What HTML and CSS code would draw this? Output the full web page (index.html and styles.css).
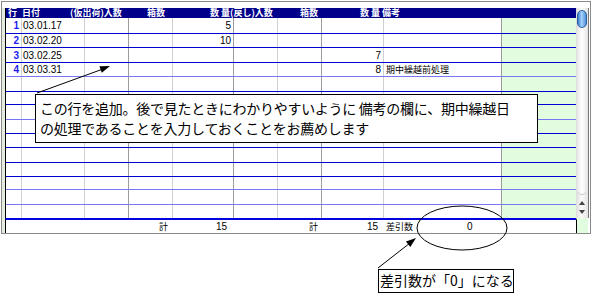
FILE: index.html
```html
<!DOCTYPE html>
<html lang="ja">
<head>
 <meta charset="UTF-8">
 <meta name="viewport" content="width=device-width, initial-scale=1.0">
 <title>差引数</title>
 <link rel="stylesheet" href="styles.css">
</head>
<body>
 <div class="frame">
  <div class="main">
   <div class="head">
    <span></span>
    <span>行</span>
    <span>日付</span>
    <span>(仮出荷)入数</span>
    <span>箱数</span>
    <span>数 量(戻し)入数</span>
    <span>箱数</span>
    <span>数 量 備考</span>
   </div>
   <div class="rows">
    <div class="row"><div class="c no">1</div><div class="c">03.01.17</div><div class="c d"></div><div class="c"></div><div class="c d num">5</div><div class="c"></div><div class="c d"></div><div class="c num"></div><div class="c d"></div><div class="c g"></div></div>
    <div class="row"><div class="c no">2</div><div class="c">03.02.20</div><div class="c d"></div><div class="c"></div><div class="c d num">10</div><div class="c"></div><div class="c d"></div><div class="c num"></div><div class="c d"></div><div class="c g"></div></div>
    <div class="row"><div class="c no">3</div><div class="c">03.02.25</div><div class="c d"></div><div class="c"></div><div class="c d num"></div><div class="c"></div><div class="c d"></div><div class="c num">7</div><div class="c d"></div><div class="c g"></div></div>
    <div class="row light"><div class="c no">4</div><div class="c">03.03.31</div><div class="c d"></div><div class="c"></div><div class="c d num"></div><div class="c"></div><div class="c d"></div><div class="c num">8</div><div class="c d note">期中繰越前処理</div><div class="c g"></div></div>
    <div class="row"><div class="c"></div><div class="c"></div><div class="c d"></div><div class="c"></div><div class="c d"></div><div class="c"></div><div class="c d"></div><div class="c"></div><div class="c d"></div><div class="c g"></div></div>
    <div class="row"><div class="c"></div><div class="c"></div><div class="c d"></div><div class="c"></div><div class="c d"></div><div class="c"></div><div class="c d"></div><div class="c"></div><div class="c d"></div><div class="c g"></div></div>
    <div class="row light"><div class="c"></div><div class="c"></div><div class="c d"></div><div class="c"></div><div class="c d"></div><div class="c"></div><div class="c d"></div><div class="c"></div><div class="c d"></div><div class="c g"></div></div>
    <div class="row"><div class="c"></div><div class="c"></div><div class="c d"></div><div class="c"></div><div class="c d"></div><div class="c"></div><div class="c d"></div><div class="c"></div><div class="c d"></div><div class="c g"></div></div>
    <div class="row"><div class="c"></div><div class="c"></div><div class="c d"></div><div class="c"></div><div class="c d"></div><div class="c"></div><div class="c d"></div><div class="c"></div><div class="c d"></div><div class="c g"></div></div>
    <div class="row"><div class="c"></div><div class="c"></div><div class="c d"></div><div class="c"></div><div class="c d"></div><div class="c"></div><div class="c d"></div><div class="c"></div><div class="c d"></div><div class="c g"></div></div>
    <div class="row"><div class="c"></div><div class="c"></div><div class="c d"></div><div class="c"></div><div class="c d"></div><div class="c"></div><div class="c d"></div><div class="c"></div><div class="c d"></div><div class="c g"></div></div>
    <div class="row light"><div class="c"></div><div class="c"></div><div class="c d"></div><div class="c"></div><div class="c d"></div><div class="c"></div><div class="c d"></div><div class="c"></div><div class="c d"></div><div class="c g"></div></div>
    <div class="row light"><div class="c"></div><div class="c"></div><div class="c d"></div><div class="c"></div><div class="c d"></div><div class="c"></div><div class="c d"></div><div class="c"></div><div class="c d"></div><div class="c g"></div></div>
    <div class="row last"><div class="c"></div><div class="c"></div><div class="c d"></div><div class="c"></div><div class="c d"></div><div class="c"></div><div class="c d"></div><div class="c"></div><div class="c d"></div><div class="c g"></div></div>
   </div>
  </div>
  <div class="scroll">
   <div class="thumb"></div>
   <div class="track"></div>
   <div class="arrows"><span class="up"></span><span class="down"></span></div>
  </div>
  <div class="foot">
   <span></span><span></span><span></span>
   <span class="sum k1">計</span>
   <span class="sum v1">15</span>
   <span></span>
   <span class="sum k2">計</span>
   <span class="sum v2">15</span>
   <span class="diff"><span>差引数</span><span class="zero">0</span></span>
   <span></span>
  </div>
  <div class="filler"></div>
 </div>

 <div class="callout first">この行を追加。後で見たときにわかりやすいように 備考の欄に、期中繰越日<br>の処理であることを入力しておくことをお薦めします</div>
 <div class="callout second">差引数が「0」になる</div>

 <svg class="marks" width="593" height="294" viewBox="0 0 593 294">
  <line x1="37" y1="93" x2="103" y2="69" stroke="#000" stroke-width="1"/>
  <polygon points="110,66 101.8,72.8 99.4,66.2" fill="#000"/>
  <ellipse cx="462" cy="228" rx="45" ry="22" fill="none" stroke="#000" stroke-width="1"/>
  <line x1="378" y1="268" x2="410" y2="243" stroke="#000" stroke-width="1"/>
  <polygon points="416,238 410.3,247 405.9,241.4" fill="#000"/>
 </svg>
</body>
</html>
```

FILE: styles.css
```css
body {
    margin: 0;
    background: #fff;
    font-family: "Liberation Sans", "Noto Sans CJK JP", sans-serif;
    position: relative;
    width: 593px;
    height: 294px;
    overflow: hidden;
 }

.frame {
    margin: 1px 0 0 1px;
    border: 1px solid #8a8a8a;
    padding: 6px 1px 0 3px;
    box-sizing: border-box;
    width: 590px;
    display: grid;
    grid-template-columns: 571px 13px;
    grid-template-rows: 210px 15px;
    background: #fff;
 }

.main {
    border-left: 1px solid #000;
    box-shadow: -3px 0 0 #e3ecdf;
 }

.head {
    height: 10px;
    background: #00008a;
    color: #fff;
    font-family: "Noto Sans CJK JP", sans-serif;
    font-size: 9px;
    font-weight: bold;
    line-height: 10px;
    display: grid;
    grid-template-columns: 2px 14px 48px 77px 63px 90px 60px 1fr;
    white-space: nowrap;
 }

.rows {
    display: grid;
    grid-template-rows: 16px 14px 15px 14px 15px 13px 15px 14px 14px 15px 14px 13px 15px 13px;
 }

.row {
    display: grid;
    grid-template-columns: 16px 63px 44px 44px 61px 44px 44px 62px 118px 74px;
    border-bottom: 1px solid #0000d2;
    font-size: 10px;
    color: #000;
 }

.row.light {
    border-bottom-color: #7777f4;
 }

.row.last {
    border-bottom: none;
 }

.c {
    border-right: 1px solid #d0d0d0;
    display: flex;
    align-items: center;
    padding-left: 1px;
    white-space: nowrap;
    overflow: hidden;
 }

.c.d {
    border-right-color: #9c9c9c;
 }

.c.g {
    border-right: none;
    background: #e2fce0;
 }

.c.no {
    justify-content: flex-end;
    padding: 0 2px 0 0;
    color: #1c1cf0;
    font-weight: bold;
 }

.c.num {
    justify-content: flex-end;
    padding: 0 2px 0 0;
 }

.note {
    font-family: "Noto Sans CJK JP", sans-serif;
    font-size: 9px;
    padding-left: 2px;
 }

.scroll {
    grid-row: 1;
    grid-column: 2;
    border-right: 1px solid #777;
    background: linear-gradient(to right, #dcdcdc, #fafafa 45%, #e4e4e4);
    display: flex;
    flex-direction: column;
 }

.thumb {
    margin: 2px 1px 0 1px;
    height: 16px;
    border-radius: 5px;
    border: 1px solid #2a5e9c;
    background: linear-gradient(to right, #3d7ed0, #a8d2fa 45%, #4f8fdc);
 }

.track {
    flex: 1;
    margin: 0 1px 1px 1px;
    border-radius: 0 0 6px 6px;
    border-bottom: 1px solid #c6c6c6;
    background: linear-gradient(to right, #e6e6e6, #ffffff 50%, #e8e8e8);
 }

.arrows {
    height: 22px;
    display: flex;
    flex-direction: column;
    align-items: center;
    justify-content: center;
    gap: 5px;
 }

.up {
    width: 0;
    height: 0;
    border-left: 3px solid transparent;
    border-right: 3px solid transparent;
    border-bottom: 4px solid #444;
 }

.down {
    width: 0;
    height: 0;
    border-left: 3px solid transparent;
    border-right: 3px solid transparent;
    border-top: 4px solid #444;
 }

.foot {
    border-top: 2px solid #0000e0;
    border-left: 1px solid #000;
    box-shadow: -3px 0 0 #e3ecdf;
    display: grid;
    grid-template-columns: 16px 63px 44px 44px 61px 44px 44px 62px 118px 74px;
    font-size: 10px;
    line-height: 13px;
    white-space: nowrap;
 }

.sum {
    text-align: right;
 }

.k1, .k2 {
    font-family: "Noto Sans CJK JP", sans-serif;
    font-size: 9px;
 }

.k1 {
    padding-right: 5px;
 }

.v1 {
    padding-right: 7px;
 }

.k2 {
    padding-right: 4px;
 }

.v2 {
    padding-right: 6px;
 }

.diff {
    display: flex;
    padding-left: 2px;
    font-family: "Noto Sans CJK JP", sans-serif;
    font-size: 9px;
 }

.zero {
    margin-left: 54px;
    font-family: "Liberation Sans", sans-serif;
    font-size: 10px;
 }

.filler {
    border-left: 1px solid #000;
    border-top: 2px solid #e2fce0;
    background: #e2fce0;
    margin-right: 1px;
 }

.callout {
    position: absolute;
    background: #fff;
    border: 1px solid #000;
    box-sizing: border-box;
    font-family: "Noto Sans CJK JP", sans-serif;
    font-size: 14px;
    color: #000;
    white-space: nowrap;
 }

.callout.first {
    left: 35px;
    top: 94px;
    width: 503px;
    height: 49px;
    padding: 3px 0 0 4px;
    line-height: 20px;
    letter-spacing: -0.25px;
 }

.callout.second {
    left: 378px;
    top: 269px;
    width: 136px;
    height: 24px;
    padding: 0 0 0 1px;
    line-height: 21px;
 }

.marks {
    position: absolute;
    left: 0;
    top: 0;
    pointer-events: none;
 }
```
